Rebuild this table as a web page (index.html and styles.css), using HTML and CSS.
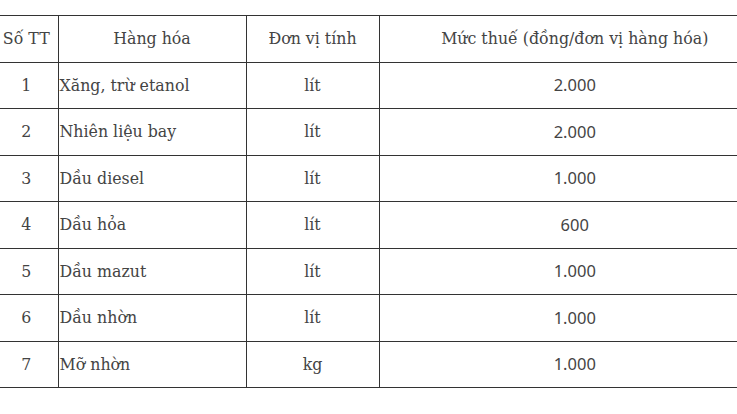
FILE: index.html
```html
<!DOCTYPE html>
<html lang="vi">
<head>
<meta charset="utf-8">
<link rel="stylesheet" href="styles.css">
</head>
<body>
<div class="wrap">
<table class="tax">
  <colgroup>
    <col class="c1"><col class="c2"><col class="c3"><col class="c4">
  </colgroup>
  <tr><td class="ctr">Số TT</td><td class="ctr">Hàng hóa</td><td class="ctr">Đơn vị tính</td><td class="ctr">Mức thuế (đồng/đơn vị hàng hóa)</td></tr>
  <tr><td class="ctr">1</td><td>Xăng, trừ etanol</td><td class="ctr">lít</td><td class="ctr num">2.000</td></tr>
  <tr><td class="ctr">2</td><td>Nhiên liệu bay</td><td class="ctr">lít</td><td class="ctr num">2.000</td></tr>
  <tr><td class="ctr">3</td><td>Dầu diesel</td><td class="ctr">lít</td><td class="ctr num">1.000</td></tr>
  <tr><td class="ctr">4</td><td>Dầu hỏa</td><td class="ctr">lít</td><td class="ctr num">600</td></tr>
  <tr><td class="ctr">5</td><td>Dầu mazut</td><td class="ctr">lít</td><td class="ctr num">1.000</td></tr>
  <tr><td class="ctr">6</td><td>Dầu nhờn</td><td class="ctr">lít</td><td class="ctr num">1.000</td></tr>
  <tr><td class="ctr">7</td><td>Mỡ nhờn</td><td class="ctr">kg</td><td class="ctr num">1.000</td></tr>
</table>
</div>
</body>
</html>
```

FILE: styles.css
```css
html, body {
  margin: 0;
  padding: 0;
  background: #ffffff;
  overflow: hidden;
}
.wrap {
  padding-top: 15px;
  margin-left: -5px;
  width: 742px;
  overflow: hidden;
}
.tax {
  border-collapse: collapse;
  table-layout: fixed;
  width: 775px;
  font-family: "DejaVu Serif", serif;
  font-size: 15.8px;
  color: #444444;
}
.c1 { width: 63px; }
.c2 { width: 188px; }
.c3 { width: 133px; }
.c4 { width: 391px; }
.tax td {
  height: 45.5px;
  padding: 0 0 0 1px;
  border-top: 1px solid #333333;
  border-bottom: 1px solid #333333;
  border-left: 1px solid #333333;
  vertical-align: middle;
  white-space: nowrap;
}
.tax td:first-child {
  border-left: none;
}
.tax td.ctr {
  text-align: center;
  padding: 0;
}
.tax td.num {
  font-family: "Noto Sans", sans-serif;
  font-size: 16.5px;
  line-height: 18px;
}
```
